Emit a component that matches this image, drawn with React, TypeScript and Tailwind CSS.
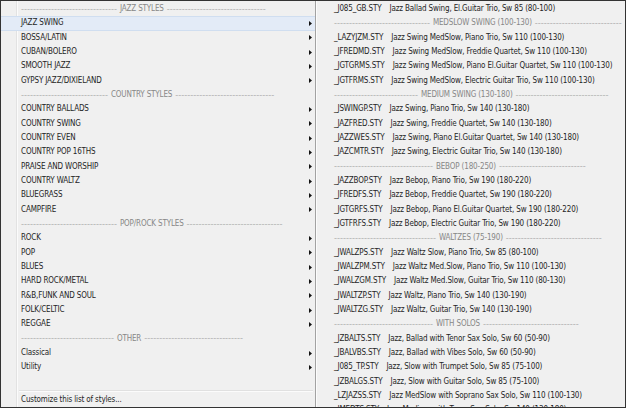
import React from "react";

const FONT = "font-['Liberation_Sans_Narrow','Arial_Narrow','DejaVu_Sans_Condensed',sans-serif]";
const DASH_W = 3.0;
const dashes = (w: number) => "-".repeat(Math.max(1, Math.round(w / DASH_W)));

type Row =
    | { kind: "h"; label: string; a: number; b: number }
    | { kind: "i"; label: string; arrow?: boolean; hl?: boolean };

const left: Row[] = [
    { kind: "h", label: "JAZZ STYLES", a: 95, b: 98 },
    { kind: "i", label: "JAZZ SWING", arrow: true, hl: true },
    { kind: "i", label: "BOSSA/LATIN", arrow: true },
    { kind: "i", label: "CUBAN/BOLERO", arrow: true },
    { kind: "i", label: "SMOOTH JAZZ", arrow: true },
    { kind: "i", label: "GYPSY JAZZ/DIXIELAND", arrow: true },
    { kind: "h", label: "COUNTRY STYLES", a: 87, b: 98 },
    { kind: "i", label: "COUNTRY BALLADS", arrow: true },
    { kind: "i", label: "COUNTRY SWING", arrow: true },
    { kind: "i", label: "COUNTRY EVEN", arrow: true },
    { kind: "i", label: "COUNTRY POP 16THS", arrow: true },
    { kind: "i", label: "PRAISE AND WORSHIP", arrow: true },
    { kind: "i", label: "COUNTRY WALTZ", arrow: true },
    { kind: "i", label: "BLUEGRASS", arrow: true },
    { kind: "i", label: "CAMPFIRE", arrow: true },
    { kind: "h", label: "POP/ROCK STYLES", a: 97, b: 96 },
    { kind: "i", label: "ROCK", arrow: true },
    { kind: "i", label: "POP", arrow: true },
    { kind: "i", label: "BLUES", arrow: true },
    { kind: "i", label: "HARD ROCK/METAL", arrow: true },
    { kind: "i", label: "R&B,FUNK AND SOUL", arrow: true },
    { kind: "i", label: "FOLK/CELTIC", arrow: true },
    { kind: "i", label: "REGGAE", arrow: true },
    { kind: "h", label: "OTHER", a: 92, b: 98 },
    { kind: "i", label: "Classical", arrow: true },
    { kind: "i", label: "Utility", arrow: true },
];

type Style = { kind: "h"; label: string; a: number; b: number } | { kind: "s"; file: string; desc: string };

const right: Style[] = [
    { kind: "s", file: "_J085_GB.STY", desc: "Jazz Ballad Swing, El.Guitar Trio, Sw 85 (80-100)" },
    { kind: "h", label: "MEDSLOW SWING (100-130)", a: 97, b: 86 },
    { kind: "s", file: "_LAZYJZM.STY", desc: "Jazz Swing MedSlow, Piano Trio, Sw 110 (100-130)" },
    { kind: "s", file: "_JFREDMD.STY", desc: "Jazz Swing MedSlow, Freddie Quartet, Sw 110 (100-130)" },
    { kind: "s", file: "_JGTGRMS.STY", desc: "Jazz Swing MedSlow, Piano El.Guitar Quartet, Sw 110 (100-130)" },
    { kind: "s", file: "_JGTFRMS.STY", desc: "Jazz Swing MedSlow, Electric Guitar Trio, Sw 110 (100-130)" },
    { kind: "h", label: "MEDIUM SWING (130-180)", a: 85, b: 94 },
    { kind: "s", file: "_JSWINGP.STY", desc: "Jazz Swing, Piano Trio, Sw 140 (130-180)" },
    { kind: "s", file: "_JAZFRED.STY", desc: "Jazz Swing, Freddie Quartet, Sw 140 (130-180)" },
    { kind: "s", file: "_JAZZWES.STY", desc: "Jazz Swing, Piano El.Guitar Quartet, Sw 140 (130-180)" },
    { kind: "s", file: "_JAZCMTR.STY", desc: "Jazz Swing, Electric Guitar Trio, Sw 140 (130-180)" },
    { kind: "h", label: "BEBOP (180-250)", a: 98, b: 86 },
    { kind: "s", file: "_JAZZBOP.STY", desc: "Jazz Bebop, Piano Trio, Sw 190 (180-220)" },
    { kind: "s", file: "_JFREDFS.STY", desc: "Jazz Bebop, Freddie Quartet, Sw 190 (180-220)" },
    { kind: "s", file: "_JGTGRFS.STY", desc: "Jazz Bebop, Piano El.Guitar Quartet, Sw 190 (180-220)" },
    { kind: "s", file: "_JGTFRFS.STY", desc: "Jazz Bebop, Electric Guitar Trio, Sw 190 (180-220)" },
    { kind: "h", label: "WALTZES (75-190)", a: 101, b: 95 },
    { kind: "s", file: "_JWALZPS.STY", desc: "Jazz Waltz Slow, Piano Trio, Sw 85 (80-100)" },
    { kind: "s", file: "_JWALZPM.STY", desc: "Jazz Waltz Med.Slow, Piano Trio, Sw 110 (100-130)" },
    { kind: "s", file: "_JWALZGM.STY", desc: "Jazz Waltz Med.Slow, Guitar Trio, Sw 110 (80-130)" },
    { kind: "s", file: "_JWALTZP.STY", desc: "Jazz Waltz, Piano Trio, Sw 140 (130-190)" },
    { kind: "s", file: "_JWALTZG.STY", desc: "Jazz Waltz, Guitar Trio, Sw 140 (130-190)" },
    { kind: "h", label: "WITH SOLOS", a: 100, b: 97 },
    { kind: "s", file: "_JZBALTS.STY", desc: "Jazz, Ballad with Tenor Sax Solo, Sw 60 (50-90)" },
    { kind: "s", file: "_JBALVBS.STY", desc: "Jazz, Ballad with Vibes Solo, Sw 60 (50-90)" },
    { kind: "s", file: "_J085_TP.STY", desc: "Jazz, Slow with Trumpet Solo, Sw 85 (75-100)" },
    { kind: "s", file: "_JZBALGS.STY", desc: "Jazz, Slow with Guitar Solo, Sw 85 (75-100)" },
    { kind: "s", file: "_LZJAZSS.STY", desc: "Jazz MedSlow with Soprano Sax Solo, Sw 110 (100-130)" },
    { kind: "s", file: "_JMEDTS.STY", desc: "Jazz Medium with Tenor Sax Solo, Sw 140 (130-180)" },
];

function Arrow() {
    return (
        <svg width="3" height="5" viewBox="0 0 3 5" className="ml-auto mr-[3px] shrink-0">
            <path d="M0 0 L3 2.5 L0 5 Z" fill="#111" />
        </svg>
    );
}

function Dashes({ w }: { w: number }) {
    return (
        <span className="font-['Liberation_Sans',sans-serif] text-[9px] tracking-normal text-[#b0b0b0]">{dashes(w)}</span>
    );
}

function Header({ label, a, b }: { label: string; a: number; b: number }) {
    return (
        <div className="h-[14.33px] shrink-0 flex items-center whitespace-nowrap">
            <Dashes w={a} />
            <span className="mx-[3px] text-[#878787]">{label}</span>
            <Dashes w={b} />
        </div>
    );
}

export default function App() {
    return (
        <div className={`w-[626px] h-[408px] overflow-hidden border border-[#333] bg-[#f0f0f0] flex text-[8px] tracking-[-0.15px] leading-none text-[#1f1f1f] ${FONT}`}>
            <div className="w-[315px] shrink-0 flex flex-col pt-[1px] border-r border-[#a2a2a2] bg-[linear-gradient(to_right,#f0f0f0_15px,#e2e2e2_15px,#e2e2e2_16px,#fbfbfb_16px,#fbfbfb_17px,#f0f0f0_17px)]">
                {left.map((r, i) =>
                    r.kind === "h" ? (
                        <div key={i} className="pl-[20px] shrink-0">
                            <Header label={r.label} a={r.a} b={r.b} />
                        </div>
                    ) : (
                        <div
                            key={i}
                            className={`h-[14.33px] shrink-0 flex items-center pl-[20px] ${r.hl ? "bg-[#e3ebf7] border-y border-[#d0def0]" : ""}`}
                        >
                            <span>{r.label}</span>
                            {r.arrow && <Arrow />}
                        </div>
                    )
                )}
                <div className="h-[18px] shrink-0 flex flex-col justify-end pb-[1px] pl-[18px] pr-[2px]">
                    <div className="h-[1px] bg-[#e0e0e0]" />
                    <div className="h-[1px] bg-[#fbfbfb]" />
                </div>
                <div className="h-[14.33px] shrink-0 flex items-center pl-[20px]">Customize this list of styles...</div>
            </div>
            <div className="flex-1 min-w-0 flex flex-col pt-[1px] border-l border-[#fcfcfc] pl-[17px] overflow-hidden">
                {right.map((r, i) =>
                    r.kind === "h" ? (
                        <Header key={i} label={r.label} a={r.a} b={r.b} />
                    ) : (
                        <div key={i} className="h-[14.33px] shrink-0 flex items-center whitespace-nowrap">
                            <span>{r.file}</span>
                            <span className="ml-[8px]">{r.desc}</span>
                        </div>
                    )
                )}
            </div>
        </div>
    );
}
